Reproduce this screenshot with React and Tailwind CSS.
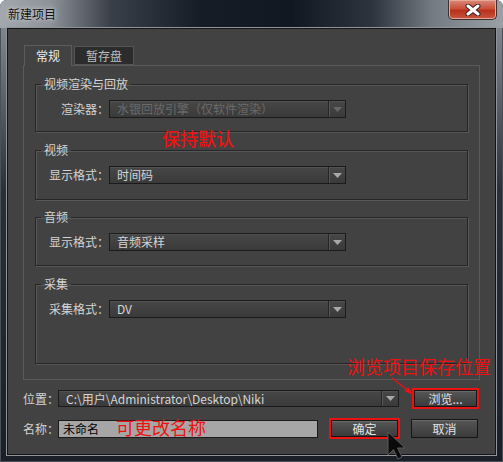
import React from 'react';

const Arrow = ({ dim }) => (
  <svg width="9" height="5" viewBox="0 0 9 5">
    <polygon points="0,0 9,0 4.5,5" fill={dim ? '#666666' : '#a8a8a8'} />
  </svg>
);

// Combo box with a dark frame and a divided arrow cell on the right
const Combo = ({ value, width, dim, height = 'h-[18px]' }) => (
  <div className={`${width} ${height} shrink-0 flex border border-[#1b1b1b] bg-[linear-gradient(180deg,#474747,#3a3a3a)] shadow-[inset_0_1px_0_#505050]`}>
    <div className={`flex-1 pl-[7px] leading-[16px] whitespace-nowrap overflow-hidden ${dim ? 'text-[#6a6a6a]' : 'text-[#d6d6d6]'}`}>
      {value}
    </div>
    <div className="w-[17px] flex items-center justify-center border-l border-[#252525] shadow-[inset_1px_0_0_#575757]">
      <Arrow dim={dim} />
    </div>
  </div>
);

const Group = ({ title, label, value, dim, height, className = '' }) => (
  <fieldset className={`${height} ${className} border border-[#262626] shadow-[1px_1px_0_#575757,inset_1px_1px_0_#575757]`}>
    <legend className="ml-[5px] px-[3px] leading-[14px] text-[#d4d4d4]">{title}</legend>
    <div className="flex items-center pt-[9px]">
      <span className="w-[73px] shrink-0 text-right leading-[16px] whitespace-nowrap text-[#d4d4d4]">{label}</span>
      <Combo value={value} width="w-[237px]" dim={dim} />
    </div>
  </fieldset>
);

const Button = ({ children, className = '' }) => (
  <div className={`${className} shrink-0 flex items-center justify-center border border-[#161616] bg-[linear-gradient(180deg,#565656,#3b3b3b)] shadow-[inset_0_1px_0_#6a6a6a] text-[#e2e2e2] leading-[16px]`}>
    {children}
  </div>
);

export default function App() {
  return (
    <div className="relative w-[503px] h-[462px] overflow-hidden rounded-t-[7px] bg-[linear-gradient(180deg,#8e949a_0px,#6a7078_70px,#2a3038_190px,#1b2028_462px)] font-['Noto_Sans_CJK_SC','Noto_Sans',sans-serif] text-[12px] shadow-[inset_0_0_0_1px_#4a5058]">
      {/* title bar */}
      <div className="h-[28px] flex items-start justify-between bg-[linear-gradient(90deg,#a3a8ae_0%,#8d9299_10%,#3a4049_22%,#161c25_40%,#121821_58%,#2e343d_74%,#757b83_86%,#9aa0a6_100%)]">
        <span className="ml-[8px] mt-[6px] leading-[16px] text-[#111111] [text-shadow:0_0_6px_#c8ccd0,0_0_3px_#c8ccd0]">新建项目</span>
        <div className="mr-[6px] w-[49px] h-[20px] rounded-b-[5px] border border-t-0 border-[#3c3030] bg-[linear-gradient(180deg,#d98a78_0%,#c9503a_45%,#b8321c_55%,#c8553e_100%)] shadow-[inset_0_0_0_1px_#e8a898] flex items-center justify-center">
          <svg width="16" height="12" viewBox="0 0 16 12">
            <path d="M3 2 L13 10 M13 2 L3 10" stroke="#3a2020" strokeWidth="5" strokeLinecap="round" />
            <path d="M3 2 L13 10 M13 2 L3 10" stroke="#ffffff" strokeWidth="3" strokeLinecap="round" />
          </svg>
        </div>
      </div>

      {/* dialog body */}
      <div className="mx-[7px] h-[427px] border border-[#151515] shadow-[0_0_0_1px_#8f959b] bg-[#424242] pl-[15px] pt-[16px]">
        {/* tabs */}
        <div className="flex items-end gap-[2px] ml-[1px]">
          <div className="relative z-10 -mb-px w-[48px] h-[21px] bg-[#424242] border-t border-l border-r border-[#5c5c5c] flex items-center justify-center text-[#ececec] leading-[16px]">常规</div>
          <div className="w-[60px] h-[19px] bg-[#2c2c2c] border border-[#555555] flex items-center justify-center text-[#bdbdbd] leading-[16px]">暂存盘</div>
        </div>

        {/* tab page */}
        <div className="w-[457px] h-[315px] border border-[#5a5a5a] px-[11px] pt-[11px]">
          <Group title="视频渲染与回放" label="渲染器：" value="水银回放引擎（仅软件渲染）" dim height="h-[55px]" />
          <Group title="视频" label="显示格式：" value="时间码" height="h-[57px]" className="mt-[11px]" />
          <Group title="音频" label="显示格式：" value="音频采样" height="h-[56px]" className="mt-[10px]" />
          <Group title="采集" label="采集格式：" value="DV" height="h-[87px]" className="mt-[11px]" />
        </div>

        {/* location */}
        <div className="mt-[8px] h-[21px] flex items-center">
          <span className="w-[35px] shrink-0 whitespace-nowrap text-[#d4d4d4] leading-[16px]">位置：</span>
          <Combo value="C:\用户\Administrator\Desktop\Niki" width="w-[341px]" height="h-[17px]" />
          <div className="ml-[13px] shrink-0 w-[67px] h-[21px] border-2 border-[#ee1111]">
            <Button className="w-full h-full">浏览...</Button>
          </div>
        </div>

        {/* name + actions */}
        <div className="mt-[9px] h-[21px] flex items-center">
          <span className="w-[35px] shrink-0 whitespace-nowrap text-[#d4d4d4] leading-[16px]">名称：</span>
          <div className="w-[260px] h-[18px] shrink-0 border border-[#1b1b1b] bg-[#a6a6a6] pl-[4px] text-[#000000] leading-[16px]">未命名</div>
          <div className="ml-[11px] shrink-0 w-[71px] h-[21px] border-2 border-[#ee1111]">
            <Button className="w-full h-full">确定</Button>
          </div>
          <Button className="ml-[11px] w-[67px] h-[19px]">取消</Button>
        </div>
      </div>

      {/* red callouts */}
      <span className="absolute left-[162px] top-[128px] text-[18px] leading-[20px] font-medium text-[#ee1111]">保持默认</span>
      <span className="absolute left-[347px] top-[356px] text-[18px] leading-[20px] text-[#ee1111]">浏览项目保存位置</span>
      <span className="absolute left-[116px] top-[417px] text-[18px] leading-[20px] text-[#ee1111]">可更改名称</span>
      <svg className="absolute left-[388px] top-[374px]" width="30" height="26" viewBox="0 0 30 26">
        <line x1="4" y1="4" x2="22" y2="18" stroke="#ee1111" strokeWidth="1.3" />
        <polygon points="25,20.5 16.5,17.5 20,13" fill="#ee1111" />
      </svg>

      {/* mouse pointer */}
      <svg className="absolute left-[387px] top-[431px]" width="22" height="31" viewBox="0 0 22 31">
        <path d="M1 1 L1 24 L6.5 18.5 L11 28 L15 26 L10.5 17 L18 17 Z" fill="#0a0a0a" stroke="#5a5a5a" strokeWidth="1" strokeLinejoin="round" />
      </svg>
    </div>
  );
}
